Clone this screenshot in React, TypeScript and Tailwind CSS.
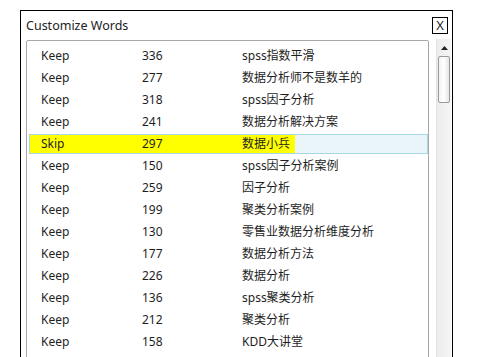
const rows: [string, number, string][] = [
  ["Keep", 336, "spss指数平滑"],
  ["Keep", 277, "数据分析师不是数羊的"],
  ["Keep", 318, "spss因子分析"],
  ["Keep", 241, "数据分析解决方案"],
  ["Skip", 297, "数据小兵"],
  ["Keep", 150, "spss因子分析案例"],
  ["Keep", 259, "因子分析"],
  ["Keep", 199, "聚类分析案例"],
  ["Keep", 130, "零售业数据分析维度分析"],
  ["Keep", 177, "数据分析方法"],
  ["Keep", 226, "数据分析"],
  ["Keep", 136, "spss聚类分析"],
  ["Keep", 212, "聚类分析"],
  ["Keep", 158, "KDD大讲堂"],
];

function Row({ action, count, word }: { action: string; count: number; word: string }) {
  const selected = action === "Skip";
  return (
    <div className="h-[22px] py-px pl-[2px]">
      <div
        className={
          selected
            ? "flex h-[20px] items-center border border-[#a9d6e6] bg-[#eaf5f9]"
            : "flex h-[20px] items-center border border-transparent"
        }
      >
        <div className={selected ? "flex h-[18px] items-center bg-[#ffff00] pr-[5px]" : "flex h-[18px] items-center"}>
          <span className="w-[112px] pl-[11px]">{action}</span>
          <span className="w-[100px]">{count}</span>
          <span>{word}</span>
        </div>
      </div>
    </div>
  );
}

export default function App() {
  return (
    <div
      className="relative h-[357px] w-[482px] overflow-hidden bg-white pl-[20px] pt-[10px] text-[12px] text-[#1e1e1e]"
      style={{ fontFamily: '"Noto Sans", "Noto Sans CJK SC", sans-serif' }}
    >
      <div className="h-[360px] w-[433px] border border-b-0 border-black">
        <div className="flex h-[28px] items-center justify-between pl-[5px] pr-[4px]">
          <span className="mt-[2px] text-[12.5px] leading-none text-[#222]">Customize Words</span>
          <div className="mt-[1px] flex h-[17px] w-[16px] items-center justify-center border border-black text-[13px] leading-none">
            X
          </div>
        </div>
        <div className="flex items-start">
          <div className="ml-[5px] mt-px h-[330px] w-[403px] rounded-[2px] border border-[#a8a8a8] pt-[4px]">
            {rows.map((r, i) => (
              <Row key={i} action={r[0]} count={r[1]} word={r[2]} />
            ))}
          </div>
          <div className="ml-[7px] flex h-[330px] w-[15px] flex-col border-l border-[#e3e3e3] bg-gradient-to-r from-[#ececec] to-[#f6f6f6]">
            <div className="flex h-[17px] items-center justify-center">
              <svg width="7" height="4" viewBox="0 0 7 4">
                <path d="M0 4 L3.5 0 L7 4 Z" fill="#222" />
              </svg>
            </div>
            <div className="mx-px h-[47px] rounded-[2px] border border-[#9a9a9a] bg-gradient-to-r from-[#f4f4f4] via-white to-[#e6e6e6]" />
          </div>
        </div>
      </div>
    </div>
  );
}
